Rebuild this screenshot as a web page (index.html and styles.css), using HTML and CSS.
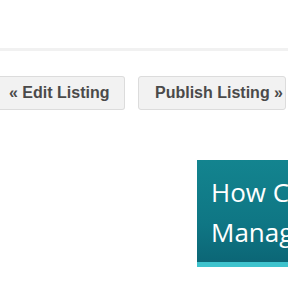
FILE: index.html
```html
<!DOCTYPE html>
<html lang="en">
<head>
    <meta charset="UTF-8">
    <title>Preview Listing</title>
    <link rel="stylesheet" href="styles.css">
</head>
<body>
    <div class="preview-top"></div>
    <hr class="preview-divider">

    <div class="listing-actions">
        <button class="btn-listing btn-edit">&laquo; Edit Listing</button>
        <button class="btn-listing btn-publish">Publish Listing &raquo;</button>
    </div>

    <div class="banner-row">
        <div class="promo-banner">
            <div class="promo-text">How C<br>Manag</div>
            <div class="promo-strip"></div>
        </div>
    </div>
</body>
</html>
```

FILE: styles.css
```css
body {
    margin: 0;
    background-color: #ffffff;
    font-family: 'Liberation Sans', Arial, sans-serif;
    overflow: hidden;
}

.preview-top {
    height: 48px;
}

/* linea gris bajo la cabecera */
.preview-divider {
    margin: 0;
    border: none;
    height: 3px;
    background-color: #f1f1f1;
}

.listing-actions {
    display: flex;
    gap: 13px;
    margin-top: 25px;
    white-space: nowrap;
}

.btn-listing {
    font-family: 'Liberation Sans', Arial, sans-serif;
    font-size: 16px;
    font-weight: bold;
    color: #4a4a4a;
    background-color: #f2f2f2;
    border: 1px solid #dcdcdc;
    border-radius: 3px;
    height: 34px;
    padding: 0 16px;
    flex-shrink: 0;
}

/* el boton izquierdo queda cortado por el borde */
.btn-edit {
    width: 125px;
    padding: 0 16px 0 9px;
    border-left: none;
    border-radius: 0 3px 3px 0;
    text-align: left;
}

.btn-publish {
    width: 148px;
}

.banner-row {
    display: flex;
    padding-left: 197px;
    margin-top: 50px;
}

.promo-banner {
    width: 91px;
    flex-shrink: 0;
    overflow: hidden;
    background: linear-gradient(180deg, #13848f 0%, #0f7684 60%, #0b6474 100%);
}

.promo-text {
    font-family: 'Open Sans', sans-serif;
    font-weight: 500;
    color: #ffffff;
    font-size: 26px;
    line-height: 40px;
    padding: 12px 0 10px 14px;
    white-space: nowrap;
}

.promo-strip {
    height: 5px;
    background-color: #3ec3cd;
}
```
